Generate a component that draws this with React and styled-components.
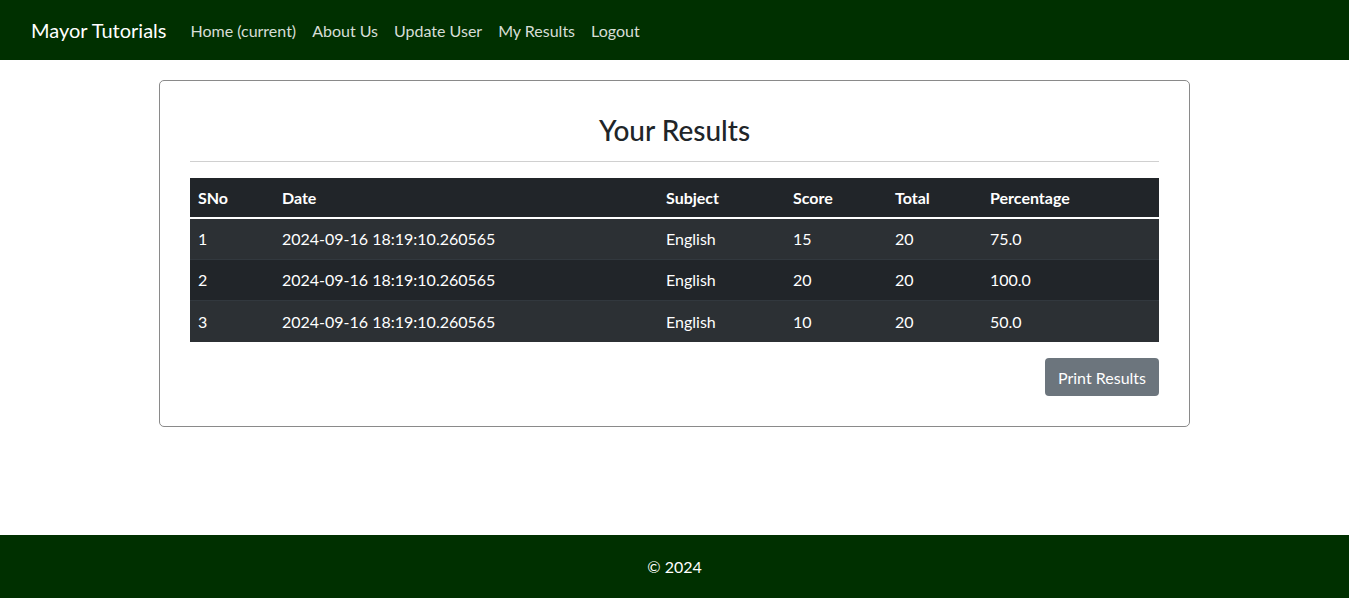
import React from "react";
import styled, { createGlobalStyle } from "styled-components";

const GlobalStyle = createGlobalStyle`
  * { box-sizing: border-box; }
  body {
    margin: 0;
    font-family: Lato, "Open Sans", sans-serif;
    font-size: 16px;
    color: #212529;
    background: #fff;
  }
`;

const Page = styled.div`
  min-height: 100vh;
  display: flex;
  flex-direction: column;
`;

const NavBar = styled.nav`
  height: 60px;
  background-color: #003000;
  display: flex;
  align-items: center;
  padding: 0 31px;
`;

const Brand = styled.a`
  color: #fff;
  font-size: 20px;
  margin-right: 16px;
  text-decoration: none;
`;

const NavList = styled.div`
  display: flex;
`;

const NavLink = styled.a`
  color: rgba(255, 255, 255, 0.85);
  padding: 8px;
  text-decoration: none;
  cursor: pointer;
`;

const Main = styled.main`
  padding-top: 20px;
  display: flex;
  justify-content: center;
`;

const Card = styled.div`
  width: 1031px;
  border: 1px solid #8a8a8a;
  border-radius: 5px;
  padding: 30px;
`;

const Title = styled.h2`
  margin: 0 0 12px 0;
  height: 38px;
  line-height: 38px;
  text-align: center;
  font-size: 28px;
  font-weight: 500;
`;

const Rule = styled.hr`
  margin: 0 0 16px 0;
  border: 0;
  border-top: 1px solid #d0d0d0;
`;

const Table = styled.table`
  width: 100%;
  border-collapse: collapse;
  color: #fff;
  background-color: #212529;

  th {
    text-align: left;
    font-weight: 700;
    height: 40px;
    padding: 0 8px;
    border-bottom: 2px solid #fff;
  }

  td {
    height: 41px;
    padding: 0 8px;
    border-bottom: 1px solid #32383e;
  }

  tbody tr:nth-child(odd) td {
    background-color: #2c3034;
  }

  tbody tr:last-child td {
    border-bottom: 0;
    height: 42px;
  }
`;

const Actions = styled.div`
  display: flex;
  justify-content: flex-end;
  margin-top: 16px;
`;

const Button = styled.button`
  height: 38px;
  padding: 0 13px;
  border: none;
  border-radius: 4px;
  background-color: #6c757d;
  color: #fff;
  font-family: inherit;
  font-size: 16px;
  cursor: pointer;
`;

const Footer = styled.footer`
  margin-top: auto;
  height: 63px;
  background-color: #003000;
  color: #fff;
  display: flex;
  align-items: center;
  justify-content: center;
`;

const columns = [
  { label: "SNo", width: 84 },
  { label: "Date", width: 384 },
  { label: "Subject", width: 127 },
  { label: "Score", width: 102 },
  { label: "Total", width: 95 },
  { label: "Percentage" },
];

const results = [
  { sno: 1, date: "2024-09-16 18:19:10.260565", subject: "English", score: 15, total: 20, pct: "75.0" },
  { sno: 2, date: "2024-09-16 18:19:10.260565", subject: "English", score: 20, total: 20, pct: "100.0" },
  { sno: 3, date: "2024-09-16 18:19:10.260565", subject: "English", score: 10, total: 20, pct: "50.0" },
];

const App = () => {
  return (
    <Page>
      <GlobalStyle />
      <NavBar>
        <Brand>Mayor Tutorials</Brand>
        <NavList>
          <NavLink>Home (current)</NavLink>
          <NavLink>About Us</NavLink>
          <NavLink>Update User</NavLink>
          <NavLink>My Results</NavLink>
          <NavLink>Logout</NavLink>
        </NavList>
      </NavBar>

      <Main>
        <Card>
          <Title>Your Results</Title>
          <Rule />
          <Table>
            <thead>
              <tr>
                {columns.map((c) => (
                  <th key={c.label} style={c.width ? { width: c.width } : undefined}>
                    {c.label}
                  </th>
                ))}
              </tr>
            </thead>
            <tbody>
              {results.map((r) => (
                <tr key={r.sno}>
                  <td>{r.sno}</td>
                  <td>{r.date}</td>
                  <td>{r.subject}</td>
                  <td>{r.score}</td>
                  <td>{r.total}</td>
                  <td>{r.pct}</td>
                </tr>
              ))}
            </tbody>
          </Table>
          <Actions>
            <Button onClick={() => window.print()}>Print Results</Button>
          </Actions>
        </Card>
      </Main>

      <Footer>© 2024</Footer>
    </Page>
  );
};

export default App;
